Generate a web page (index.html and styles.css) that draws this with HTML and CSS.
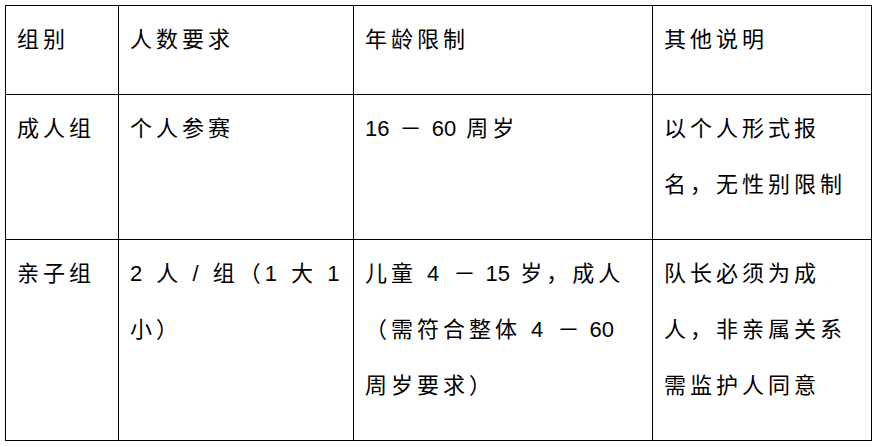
FILE: index.html
```html
<!DOCTYPE html>
<html lang="zh-CN">
<head>
<meta charset="utf-8">
<title>参赛分组</title>
<link rel="stylesheet" href="styles.css">
</head>
<body>
<div class="page">
  <table class="rules">
    <colgroup>
      <col class="c1">
      <col class="c2">
      <col class="c3">
      <col class="c4">
    </colgroup>
    <tr>
      <td>组别</td>
      <td>人数要求</td>
      <td class="age">年龄限制</td>
      <td>其他说明</td>
    </tr>
    <tr>
      <td>成人组</td>
      <td>个人参赛</td>
      <td class="age"><span class="num">16</span> <span class="dash">－</span> <span class="num">60</span> 周岁</td>
      <td>以个人形式报名，无性别限制</td>
    </tr>
    <tr>
      <td>亲子组</td>
      <td>2 人 / 组（1 大 1 小）</td>
      <td class="age">儿童 4 <span class="dash">－</span> <span class="num">15</span> 岁，成人（需符合整体 4 <span class="dash">－</span> <span class="num">60</span> 周岁要求）</td>
      <td>队长必须为成人，非亲属关系需监护人同意</td>
    </tr>
  </table>
</div>
</body>
</html>
```

FILE: styles.css
```css
html, body {
  margin: 0;
  padding: 0;
  background: #ffffff;
}

.page {
  padding: 5px;
}

.rules {
  border-collapse: collapse;
  table-layout: fixed;
  width: 866px;
  font-family: "Liberation Sans", "Noto Sans CJK SC", sans-serif;
  font-size: 22px;
  letter-spacing: 4px;
  line-height: 56px;
  color: #000000;
}

.c1 { width: 113px; }
.c2 { width: 235px; }
.c3 { width: 299px; }
.c4 { width: 219px; }

.rules td {
  border: 1px solid #000000;
  padding: 6px 6px 26px 11px;
  vertical-align: top;
  text-align: left;
}

.rules td.age {
  padding-right: 16px;
}

.num {
  letter-spacing: 0;
}

.dash {
  letter-spacing: 0;
}
```
